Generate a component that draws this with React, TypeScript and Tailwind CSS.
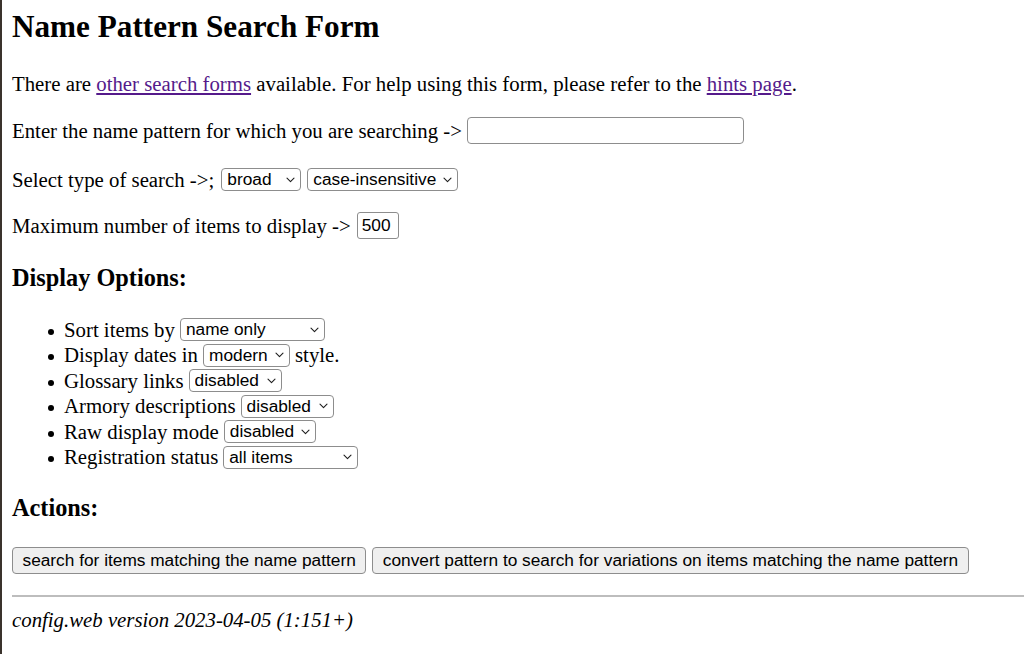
import React from "react";

function Chevron() {
  return (
    <svg
      width="9"
      height="6"
      viewBox="0 0 9 6"
      fill="none"
      className="pointer-events-none absolute right-[6px] top-1/2 -translate-y-1/2"
    >
      <path d="M1 1.2 L4.5 4.7 L8 1.2" stroke="#1f1f1f" strokeWidth="1.1" strokeLinecap="round" strokeLinejoin="round" />
    </svg>
  );
}

function Sel({ value, options, w }: { value: string; options?: string[]; w: string }) {
  return (
    <span className={`relative inline-flex shrink-0 ${w}`}>
      <select
        defaultValue={value}
        className="h-[23px] w-full appearance-none rounded-[4px] border border-[#8d8d8d] bg-white pl-[5px] pr-[18px] font-['Liberation_Sans',Arial,sans-serif] text-[17.3px] leading-[21px] text-black outline-none"
      >
        {(options ?? [value]).map((o) => (
          <option key={o}>{o}</option>
        ))}
      </select>
      <Chevron />
    </span>
  );
}

function Item({ children }: { children: React.ReactNode }) {
  return (
    <li className="flex h-[25.5px] items-center gap-[5px]">
      <span className="mr-[5px] h-[6px] w-[6px] shrink-0 translate-y-[2px] rounded-full bg-black" />
      {children}
    </li>
  );
}

export default function App() {
  return (
    <div className="min-h-screen w-full border-l-2 border-[#3a322c] bg-white font-['Liberation_Serif','Times_New_Roman',serif] text-[20.8px] text-black">
      <div className="pl-[10px] pt-[9px]">
        <h2 className="text-[31.2px] font-bold leading-[36px]">Name Pattern Search Form</h2>

        <p className="mt-[27px] leading-[24px]">
          There are{" "}
          <a href="#" className="text-[#551a8b] underline">
            other search forms
          </a>{" "}
          available. For help using this form, please refer to the{" "}
          <a href="#" className="text-[#551a8b] underline">
            hints page
          </a>
          .
        </p>

        <div className="mt-[21px] flex h-[27px] items-center gap-[5px] leading-[24px]">
          <span>Enter the name pattern for which you are searching -&gt;</span>
          <input
            type="text"
            className="h-[27px] w-[277px] rounded-[4px] border border-[#8d8d8d] bg-white px-[4px] font-['Liberation_Sans',Arial,sans-serif] text-[17.3px] outline-none"
          />
        </div>

        <div className="mt-[24px] flex h-[23px] items-center gap-[6px] leading-[24px]">
          <span className="mr-[1px]">Select type of search -&gt;;</span>
          <Sel value="broad" options={["broad", "narrow"]} w="w-[80px]" />
          <Sel value="case-insensitive" options={["case-insensitive", "case-sensitive"]} w="w-[151px]" />
        </div>

        <div className="mt-[21px] flex h-[27px] items-center gap-[6px] leading-[24px]">
          <span>Maximum number of items to display -&gt;</span>
          <input
            type="text"
            defaultValue="500"
            className="h-[27px] w-[42px] rounded-[3px] border border-[#8d8d8d] bg-white px-[4px] font-['Liberation_Sans',Arial,sans-serif] text-[17.3px] text-black outline-none"
          />
        </div>

        <h3 className="mt-[25px] text-[24.3px] font-bold leading-[28px]">Display Options:</h3>

        <ul className="mt-[25px] pl-[36px] leading-[24px]">
          <Item>
            <span>Sort items by</span>
            <Sel value="name only" options={["name only", "last action date"]} w="w-[145px]" />
          </Item>
          <Item>
            <span>Display dates in</span>
            <Sel value="modern" options={["modern", "historic"]} w="w-[87px]" />
            <span>style.</span>
          </Item>
          <Item>
            <span>Glossary links</span>
            <Sel value="disabled" options={["disabled", "enabled"]} w="w-[93px]" />
          </Item>
          <Item>
            <span>Armory descriptions</span>
            <Sel value="disabled" options={["disabled", "enabled"]} w="w-[93px]" />
          </Item>
          <Item>
            <span>Raw display mode</span>
            <Sel value="disabled" options={["disabled", "enabled"]} w="w-[92px]" />
          </Item>
          <Item>
            <span>Registration status</span>
            <Sel value="all items" options={["all items", "registered only"]} w="w-[135px]" />
          </Item>
        </ul>

        <h3 className="mt-[24px] text-[24.3px] font-bold leading-[28px]">Actions:</h3>

        <div className="mt-[25px] flex items-center gap-[6px]">
          <button className="h-[27px] rounded-[4px] border border-[#8d8d8d] bg-[#efefef] px-[9.5px] font-['Liberation_Sans',Arial,sans-serif] text-[17.3px] leading-[21px] text-black">
            search for items matching the name pattern
          </button>
          <button className="h-[27px] rounded-[4px] border border-[#8d8d8d] bg-[#efefef] px-[9.5px] font-['Liberation_Sans',Arial,sans-serif] text-[17.3px] leading-[21px] text-black">
            convert pattern to search for variations on items matching the name pattern
          </button>
        </div>

        <hr className="mt-[21px] border-0 border-t-2 border-[#bdbdbd]" />

        <p className="mt-[11px] italic leading-[24px]">config.web version 2023-04-05 (1:151+)</p>
      </div>
    </div>
  );
}
